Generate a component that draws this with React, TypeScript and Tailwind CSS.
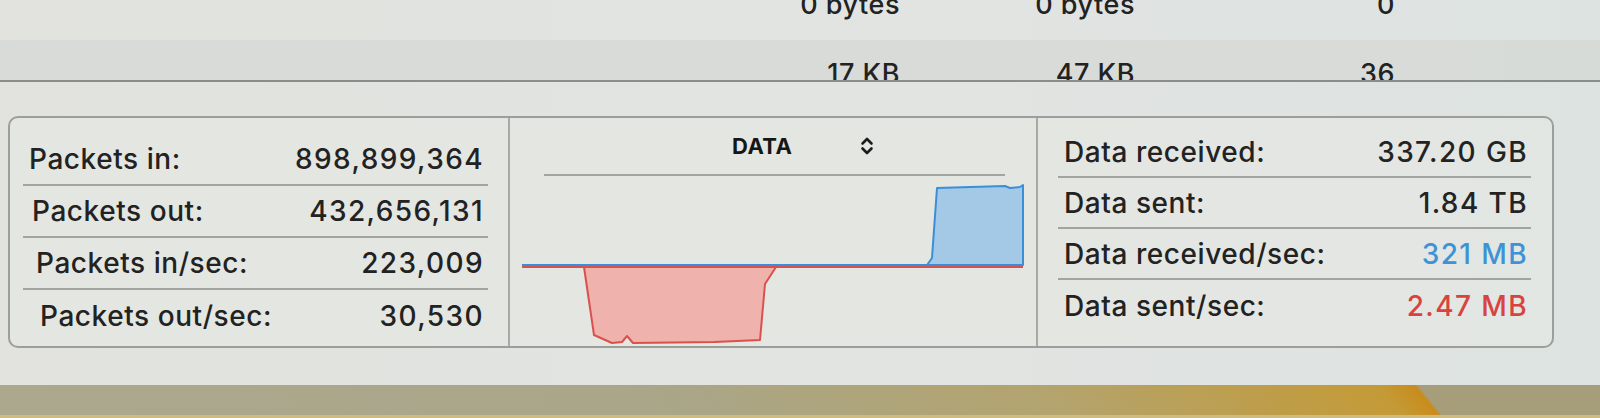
import React from "react";

const packets = [
  { label: "Packets in:", value: "898,899,364" },
  { label: "Packets out:", value: "432,656,131" },
  { label: "Packets in/sec:", value: "223,009" },
  { label: "Packets out/sec:", value: "30,530" },
];

const data = [
  { label: "Data received:", value: "337.20 GB", color: "text-[#232323]" },
  { label: "Data sent:", value: "1.84 TB", color: "text-[#232323]" },
  { label: "Data received/sec:", value: "321 MB", color: "text-[#3d93d6]" },
  { label: "Data sent/sec:", value: "2.47 MB", color: "text-[#d8423f]" },
];

// left padding per row follows the slight tilt of the photo
const packetPad = ["pl-[6px]", "pl-[9px]", "pl-[13px]", "pl-[17px]"];

function TableRow({ cells, className }: { cells: string[]; className: string }) {
  return (
    <div className={"flex overflow-hidden text-[27px] leading-[32px] tracking-[0.02em] text-[#222] " + className}>
      <div className="w-[900px] shrink-0 text-right">{cells[0]}</div>
      <div className="w-[235px] shrink-0 text-right">{cells[1]}</div>
      <div className="w-[260px] shrink-0 text-right">{cells[2]}</div>
    </div>
  );
}

function Chevrons() {
  return (
    <svg width="14" height="20" viewBox="0 0 14 20" fill="none" stroke="#1c1c1c" strokeWidth="2.6" strokeLinecap="round" strokeLinejoin="round">
      <path d="M2.5 7.5 L7 3 L11.5 7.5" />
      <path d="M2.5 12.5 L7 17 L11.5 12.5" />
    </svg>
  );
}

function Chart() {
  return (
    <svg width="512" height="168" viewBox="0 0 512 168" className="ml-[8px]">
      <polygon
        points="66,91 76,159 94,167 104,166 109,160 115,167 196,166 242,164 247,108 258,91"
        fill="#efb2ac"
        stroke="#d9514c"
        strokeWidth="2"
        strokeLinejoin="round"
      />
      <polygon
        points="409,89 414,82 419,12 487,10 492,12 502,11 505,9 505,89"
        fill="#a3c9e6"
        stroke="#3a8fd8"
        strokeWidth="2"
        strokeLinejoin="round"
      />
      <line x1="4" y1="91" x2="505" y2="91" stroke="#d9514c" strokeWidth="2" />
      <line x1="4" y1="89" x2="505" y2="89" stroke="#3a8fd8" strokeWidth="2" />
    </svg>
  );
}

export default function App() {
  return (
    <div className="w-[1600px] h-[418px] overflow-hidden flex flex-col bg-[linear-gradient(to_right,#e2e3df,#e1e4e1_60%,#dde3e1)] font-['Inter','Liberation_Sans',sans-serif] font-medium text-[#222]">
      {/* process table rows, cut off by the window */}
      <TableRow cells={["0 bytes", "0 bytes", "0"]} className="h-[40px] items-start [&>div]:-mt-[11px]" />
      <TableRow cells={["17 KB", "47 KB", "36"]} className="h-[40px] bg-[#d6d8d4]/80 items-start [&>div]:mt-[18px]" />
      <div className="h-[2px] bg-[#8b8d8a]" />
      <div className="h-[34px]" />

      {/* stats panel */}
      <div className="ml-[8px] w-[1546px] h-[232px] shrink-0 flex border-2 border-[#9c9e9a] rounded-[10px] bg-[#e6e7e3]/60">
        <div className="w-[500px] shrink-0 border-r-2 border-[#a7a9a5] pt-[16px]">
          <div className="ml-[13px] w-[465px]">
            {packets.map((row, i) => (
              <div
                key={row.label}
                className={
                  "h-[52px] flex items-center justify-between pr-[4px] text-[28px] " +
                  packetPad[i] +
                  (i < 3 ? " border-b-2 border-[#a2a4a0]" : "")
                }
              >
                <span className="tracking-[0.02em]">{row.label}</span>
                <span className="tracking-[0.05em]">{row.value}</span>
              </div>
            ))}
          </div>
        </div>

        <div className="w-[528px] shrink-0 border-r-2 border-[#a7a9a5] flex flex-col">
          <div className="h-[58px] ml-[34px] w-[461px] border-b-2 border-[#a2a4a0] flex items-center">
            <span className="ml-[188px] text-[22px] font-bold tracking-[0.02em] text-[#161616]">DATA</span>
            <span className="ml-[68px] flex items-center">
              <Chevrons />
            </span>
          </div>
          <Chart />
        </div>

        <div className="flex-1 pt-[9px]">
          <div className="ml-[20px] w-[473px]">
            {data.map((row, i) => (
              <div
                key={row.label}
                className={
                  "h-[51px] flex items-center justify-between pl-[6px] pr-[3px] text-[28px] " +
                  (i < 3 ? "border-b-2 border-[#a2a4a0]" : "")
                }
              >
                <span className="tracking-[0.02em]">{row.label}</span>
                <span className={"tracking-[0.05em] " + row.color}>{row.value}</span>
              </div>
            ))}
          </div>
        </div>
      </div>

      <div className="flex-1" />

      {/* desk / screen bezel seen below the window */}
      <div className="h-[33px] shrink-0 bg-[linear-gradient(51deg,#aba88e_0px,#a9a689_520px,#b3a46f_820px,#c49a36_1090px,#c98c1c_1118px,#a69d7b_1121px,#a69d7b_100%)] border-b-[3px] border-[#cdbb80]" />
    </div>
  );
}
